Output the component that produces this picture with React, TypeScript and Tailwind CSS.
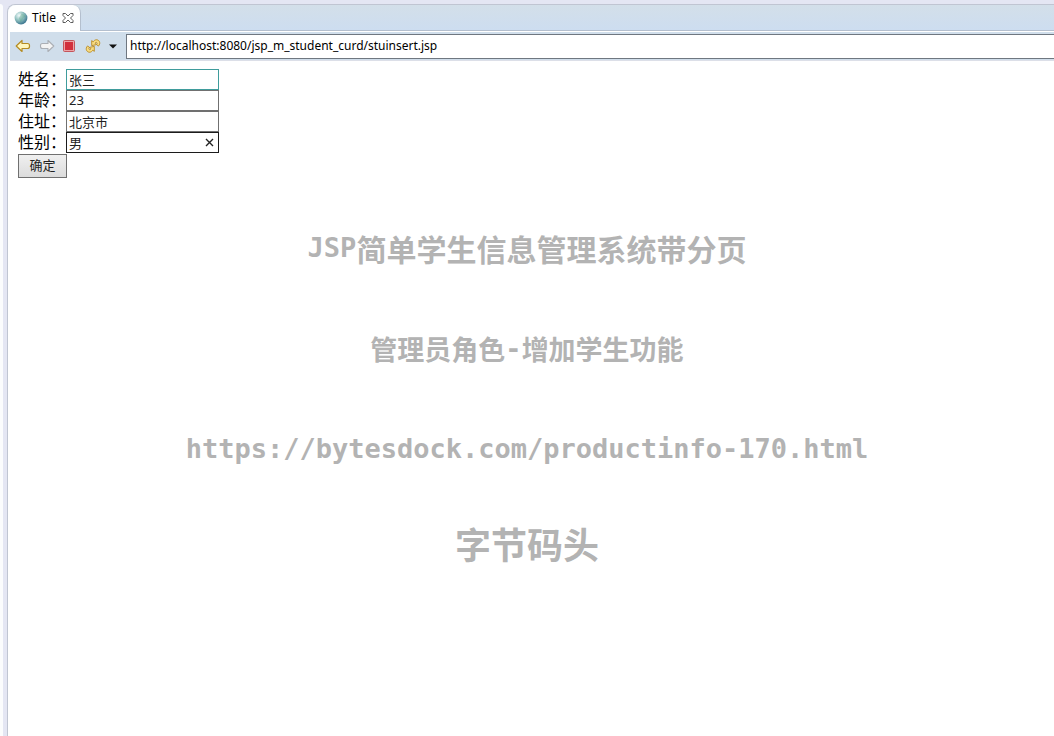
import React, { useState } from 'react';

type FieldKey = 'name' | 'age' | 'address' | 'sex';

interface Field {
    key: FieldKey;
    label: string;
    border: string;
}

const fields: Field[] = [
    { key: 'name', label: '姓名：', border: 'border-[#3f9c9c]' },
    { key: 'age', label: '年龄：', border: 'border-[#707070]' },
    { key: 'address', label: '住址：', border: 'border-[#707070]' },
    { key: 'sex', label: '性别：', border: 'border-[#1c1c1c]' },
];

const GlobeIcon = () => (
    <svg width="14" height="14" viewBox="0 0 14 14" aria-hidden="true">
        <defs>
            <radialGradient id="globe" cx="0.35" cy="0.3" r="0.75">
                <stop offset="0" stopColor="#f2fafa" />
                <stop offset="0.5" stopColor="#8fc0bf" />
                <stop offset="1" stopColor="#35708c" />
            </radialGradient>
        </defs>
        <circle cx="7" cy="7" r="6.4" fill="url(#globe)" />
        <path d="M7.5 2.5c2 .3 3.4 1.5 3.8 3.2-.8 1-2 .6-2.4 1.8-.3 1.4-1.4 2.6-2.4 3.4-.8-1-.4-2.4-1.6-3.2C5 6 6.7 4.5 7.5 2.5z" fill="#4d9a7c" opacity="0.3" />
    </svg>
);

const TabCloseIcon = () => (
    <svg width="12" height="12" viewBox="0 0 12 12" aria-hidden="true">
        <path
            d="M1 1.5h2.5L6 4l2.500-2.500H11v2L8.500 6 11 8.500v2H8.500L6 8l-2.500 2.500H1v-2L3.500 6 1 3.500z"
            fill="#fff"
            stroke="#5d5d5d"
        />
    </svg>
);

const BackIcon = () => (
    <svg width="16" height="14" viewBox="0 0 16 14" aria-hidden="true">
        <path d="M1.200 7L7 1.500V4.500H12.500Q14.500 4.500 14.500 6.500V7.500Q14.500 9.500 12.500 9.500H7V12.500z" fill="#fff6bd" stroke="#b48b22" strokeWidth="1.200" strokeLinejoin="round" />
    </svg>
);

const ForwardIcon = () => (
    <svg width="16" height="14" viewBox="0 0 16 14" aria-hidden="true">
        <path d="M14.800 7L9 1.500V4.500H3.500Q1.500 4.500 1.500 6.500V7.500Q1.500 9.500 3.500 9.500H9V12.500z" fill="#f3f3f3" stroke="#aaaeb4" strokeWidth="1.100" strokeLinejoin="round" />
    </svg>
);

const StopIcon = () => (
    <svg width="12" height="12" viewBox="0 0 12 12" aria-hidden="true">
        <rect x="0.500" y="0.500" width="11" height="11" rx="1" fill="#eba5a8" stroke="#c4545b" />
        <rect x="2" y="2" width="8" height="8" fill="#d22f3c" />
    </svg>
);

const RefreshIcon = () => (
    <svg width="16" height="16" viewBox="0 0 16 16" aria-hidden="true">
        <g fill="#f8dd83" stroke="#b98a24" strokeWidth="0.900" strokeLinejoin="round">
            <path d="M6.700 7.600V2.600L8.200 3.800C9.600 1.400 12.600 1 14.200 3.200C15.200 4.900 14.800 6.700 13.400 8.100L11.600 6.600C12.500 5.500 12.100 4.500 11.300 4.300C10.700 4.200 10.300 4.700 10.100 5.300L11.600 6.600z" />
            <path d="M9.300 8.400V13.400L7.800 12.200C6.400 14.600 3.400 15 1.800 12.800C.8 11.100 1.200 9.300 2.600 7.900L4.400 9.400C3.500 10.500 3.900 11.500 4.700 11.700C5.300 11.800 5.700 11.300 5.900 10.700L4.400 9.400z" />
        </g>
    </svg>
);

const CaretIcon = () => (
    <svg width="8" height="5" viewBox="0 0 8 5" aria-hidden="true">
        <path d="M0 0.500h8L4 4.500z" fill="#111" />
    </svg>
);

const Toolbar = () => {
    const [url, setUrl] = useState('http://localhost:8080/jsp_m_student_curd/stuinsert.jsp');

    return (
        <div className="ml-0.5 flex h-[29px] items-center border-b border-[#dcdfe8] bg-[#d0deeb]">
            <div className="flex w-[116px] shrink-0 items-center pl-[5px]">
                <button type="button" aria-label="Back" className="mr-2"><BackIcon /></button>
                <button type="button" aria-label="Forward" className="mr-2"><ForwardIcon /></button>
                <button type="button" aria-label="Stop" className="mr-2.5"><StopIcon /></button>
                <button type="button" aria-label="Refresh" className="mr-2"><RefreshIcon /></button>
                <button type="button" aria-label="More"><CaretIcon /></button>
            </div>
            <input
                type="text"
                aria-label="URL"
                value={url}
                onChange={(e) => setUrl(e.target.value)}
                className="h-[25px] min-w-0 flex-1 border border-r-0 border-[#6f7780] bg-white px-[3px] pb-0.5 font-['Noto_Sans','Noto_Sans_CJK_SC',sans-serif] text-[12px] text-black outline-none"
            />
        </div>
    );
};

const StudentForm = () => {
    const [values, setValues] = useState<Record<FieldKey, string>>({
        name: '张三',
        age: '23',
        address: '北京市',
        sex: '男',
    });

    const handleChange = (key: FieldKey, value: string) => {
        setValues({ ...values, [key]: value });
    };

    return (
        <form onSubmit={(e) => e.preventDefault()} className="px-2.5 pt-2 font-['Liberation_Sans','Noto_Sans_CJK_SC',sans-serif]">
            {fields.map((field) => (
                <div key={field.key} className="flex h-[21px] items-center">
                    <label htmlFor={field.key} className="w-12 whitespace-nowrap text-[16px] leading-[21px]">
                        {field.label}
                    </label>
                    <div className="relative">
                        <input
                            id={field.key}
                            type="text"
                            value={values[field.key]}
                            onChange={(e) => handleChange(field.key, e.target.value)}
                            className={`block h-[21px] w-[153px] border bg-white px-0.5 pb-px font-['Noto_Sans','Noto_Sans_CJK_SC',sans-serif] text-[13px] text-[#222] outline-none ${field.border}`}
                        />
                        {field.key === 'sex' && (
                            <button
                                type="button"
                                aria-label="Clear"
                                onClick={() => handleChange('sex', '')}
                                className="absolute inset-y-0 right-1 flex items-center px-px"
                            >
                                <svg width="9" height="9" viewBox="0 0 9 9" aria-hidden="true">
                                    <path d="M1 1l7 7M8 1L1 8" stroke="#222" strokeWidth="1.400" />
                                </svg>
                            </button>
                        )}
                    </div>
                </div>
            ))}
            <button
                type="submit"
                className="mt-px block h-6 w-[49px] border border-[#707070] bg-linear-to-b from-[#f0f0f0] to-[#dcdcdc] text-[13px] leading-[22px] text-[#222]"
            >
                确定
            </button>
        </form>
    );
};

const Watermark = () => (
    <div className="pointer-events-none absolute inset-x-0 top-0 flex flex-col items-center gap-14 pt-[225px] font-bold whitespace-nowrap text-[#b3b3b3]">
        <p className="flex items-center text-[30px] leading-[46px]">
            <span className="font-['DejaVu_Sans_Mono',monospace] text-[27px]">JSP</span>
            <span>简单学生信息管理系统带分页</span>
        </p>
        <p className="flex items-center text-[27px] leading-[44px]">
            <span>管理员角色</span>
            <span className="font-['DejaVu_Sans_Mono',monospace]">-</span>
            <span>增加学生功能</span>
        </p>
        <p className="font-['DejaVu_Sans_Mono',monospace] text-[27px] leading-[44px]">
            https://bytesdock.com/productinfo-170.html
        </p>
        <p className="text-[36px] leading-8">字节码头</p>
    </div>
);

export default function App() {
    return (
        <div
            lang="zh-CN"
            className="relative flex min-h-screen overflow-hidden bg-[#e4e6f3] pt-1 font-['Noto_Sans_CJK_SC',sans-serif] text-black"
        >
            <div className="mr-1 w-[3px] shrink-0 rounded-tr bg-[#fbfcfd]" />
            <div className="flex min-w-0 flex-1 flex-col rounded-tl-lg border-t border-l border-[#c0c5d2] bg-white">
                <div className="flex h-[26px] rounded-tl-lg border-b border-[#b4bfce] bg-linear-to-b from-[#d3dfe9] to-[#cdddf0]">
                    <div className="-mb-px flex items-center rounded-t-lg border-r border-[#b4bfce] bg-white pr-1.5 pl-1.5">
                        <GlobeIcon />
                        <span className="mr-1.5 ml-1 font-['Noto_Sans',sans-serif] text-[12px]">Title</span>
                        <button type="button" aria-label="Close tab"><TabCloseIcon /></button>
                    </div>
                </div>
                <div className="pt-px">
                    <Toolbar />
                </div>
                <main className="flex-1">
                    <StudentForm />
                </main>
            </div>
            <Watermark />
        </div>
    );
}
